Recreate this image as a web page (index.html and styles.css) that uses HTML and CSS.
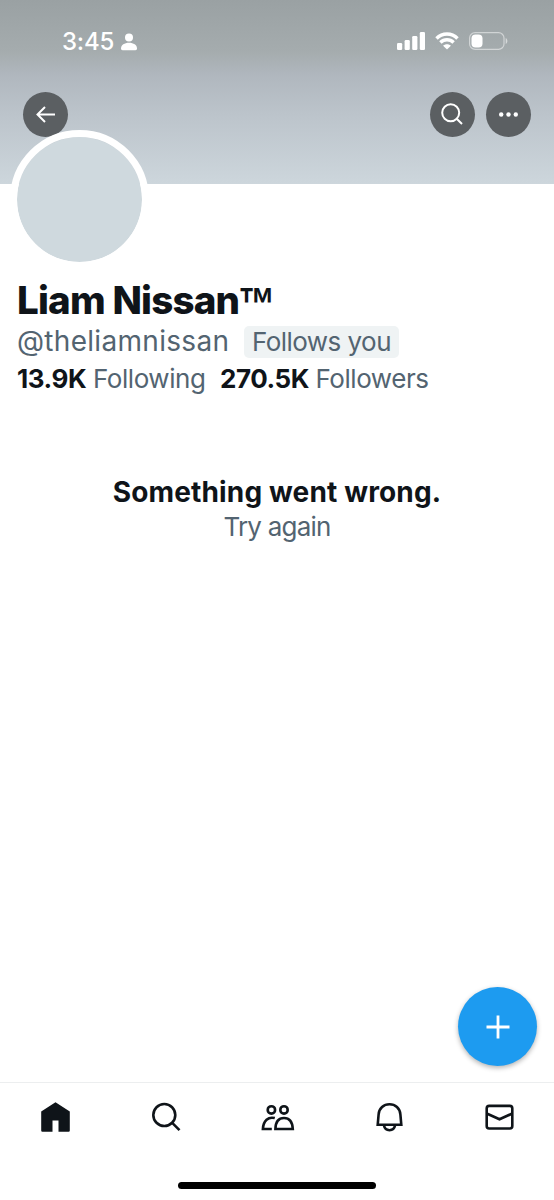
FILE: index.html
```
<!DOCTYPE html>
<html lang="en">
<head>
    <meta charset="UTF-8">
    <meta name="viewport" content="width=device-width, initial-scale=1.0">
    <title>Liam Nissan™</title>
    <link rel="stylesheet" href="styles.css">
</head>
<body>
    <div class="screen">
        <header class="banner">
            <div class="status-bar">
                <div class="status-left">
                    <span class="time">3:45</span>
                    <svg width="16" height="18" viewBox="0 0 16 18" fill="#fff">
                        <circle cx="8" cy="4.5" r="4"/>
                        <path d="M0 15.500C0 12 3.500 9.800 8 9.800s8 2.200 8 5.700c0 1.200-.6 1.700-1.600 1.700H1.600C.6 17.200 0 16.700 0 15.500z"/>
                    </svg>
                </div>
                <div class="status-right">
                    <svg width="28" height="18" viewBox="0 0 28 18" fill="#fff">
                        <rect x="0" y="11" width="5.2" height="7" rx="1.3"/>
                        <rect x="7.6" y="8" width="5.2" height="10" rx="1.3"/>
                        <rect x="15.2" y="4" width="5.2" height="14" rx="1.3"/>
                        <rect x="22.8" y="0" width="5.2" height="18" rx="1.3"/>
                    </svg>
                    <svg width="24" height="18" viewBox="0 0 24 18">
                        <path d="M1.500 6.500C7.300 .5 16.700 .5 22.500 6.500M5.400 10.500c3.700-3.700 9.500-3.700 13.200 0" fill="none" stroke="#fff" stroke-width="3.4"/>
                        <path d="M12 17.600l-3.900-3.900c2.200-2 5.600-2 7.800 0z" fill="#fff"/>
                    </svg>
                    <svg width="39" height="18" viewBox="0 0 39 18">
                        <rect x=".6" y=".6" width="34.4" height="16.8" rx="5.5" fill="none" stroke="#fff" stroke-opacity=".5" stroke-width="1.2"/>
                        <rect x="2.5" y="2.5" width="11" height="13" rx="4" fill="#fff"/>
                        <path d="M36.700 6c2.200 1 2.200 5 0 6z" fill="#fff" fill-opacity=".55"/>
                    </svg>
                </div>
            </div>
            <div class="toolbar">
                <button class="round-btn back" aria-label="Back">
                    <svg width="45" height="45" viewBox="0 0 45 45">
                        <path d="M32 22.500H15M22 15L14.500 22.500 22 30"/>
                    </svg>
                </button>
                <button class="round-btn" aria-label="Search">
                    <svg width="45" height="45" viewBox="0 0 45 45">
                        <circle cx="20.7" cy="20.700" r="8.5"/>
                        <path d="M26.700 26.700l5.300 5.300"/>
                    </svg>
                </button>
                <button class="round-btn" aria-label="More">
                    <svg class="dots" width="45" height="45" viewBox="0 0 45 45">
                        <circle cx="15.2" cy="22.500" r="2.200"/>
                        <circle cx="22.5" cy="22.500" r="2.200"/>
                        <circle cx="29.8" cy="22.500" r="2.200"/>
                    </svg>
                </button>
            </div>
        </header>

        <main class="content">
            <div class="avatar"></div>
            <h1 class="name">Liam Nissan<span class="tm">™</span></h1>
            <div class="handle-row">
                <span class="handle">@theliamnissan</span>
                <span class="badge">Follows you</span>
            </div>
            <div class="stats">
                <b class="following-count">13.9K</b>
                <span class="following">Following</span>
                <b class="followers-count">270.5K</b>
                <span class="followers">Followers</span>
            </div>
            <div class="error">
                <p class="error-title">Something went wrong.</p>
                <a class="retry">Try again</a>
            </div>
        </main>

        <button class="compose" aria-label="New post">
            <svg width="24" height="24" viewBox="0 0 24 24">
                <path d="M12 .5v23M.5 12h23" stroke="#fff" stroke-width="2.8"/>
            </svg>
        </button>

        <nav class="tabs">
            <svg width="36" height="36" viewBox="-.5 0 36 36">
                <path d="M18 3.300L32.300 12.500V31.500q0 1.200-1.200 1.200H21V21.500h-6v11.200H4.900q-1.200 0-1.200-1.200V12.500z" fill="#0f1419"/>
            </svg>
            <svg class="line" width="36" height="36" viewBox="-.5 0 36 36">
                <circle cx="15.800" cy="16" r="11"/>
                <path d="M23.700 23.900l7.300 7.300"/>
            </svg>
            <svg class="line" width="36" height="36" viewBox="-.8 0 36 36">
                <circle cx="11.600" cy="10.900" r="3.700"/>
                <circle cx="24.200" cy="10.900" r="3.700"/>
                <path d="M15 19.100C8.500 17.300 3.500 21.800 3.100 30H12"/>
                <path d="M15.600 30C15.800 22.800 19 19 24.200 19S32.600 22.800 33 30z"/>
            </svg>
            <svg class="line" width="36" height="36" viewBox="-1.5 0 36 36">
                <path d="M6.200 25.800L7.100 15.500C7.500 9 12.300 5.300 18 5.300s10.500 3.700 10.900 10.200l.9 10.300z"/>
                <path d="M12.400 26.300c.6 2.900 2.600 4.900 5.600 4.900s5-2 5.600-4.900"/>
            </svg>
            <svg class="line" width="36" height="36" viewBox="-.5 0 36 36">
                <rect x="5.200" y="6.900" width="25.600" height="22.600" rx="2.500"/>
                <path d="M5.200 14.500L18 20.300 30.800 14.500"/>
            </svg>
        </nav>
        <div class="home-indicator"></div>
    </div>
</body>
</html>
```
FILE: styles.css
```
* {
    box-sizing: border-box;
}
body {
    margin: 0;
    background: #fff;
    color: #0f1419;
    font-family: Inter, "Liberation Sans", sans-serif;
}
.screen {
    position: relative;
    display: flex;
    flex-direction: column;
    width: 554px;
    height: 1200px;
    overflow: hidden;
}
svg {
    display: block;
    flex: none;
}
button {
    padding: 0;
    border: none;
}
.banner {
    height: 184px;
    background: linear-gradient(#9aa1a3 0, #a5acae 52px, #b0b7be 75px, #bcc4cb 115px, #cdd6dc 184px);
}
.status-bar {
    display: flex;
    justify-content: space-between;
    height: 92px;
    padding: 32px 46px 0 62px;
}
.status-left {
    display: flex;
    gap: 6px;
    height: 19px;
    align-items: center;
}
.time {
    width: 53px;
    color: #fff;
    font-size: 24px;
    font-weight: 500;
    letter-spacing: -0.2px;
    line-height: 18px;
    white-space: nowrap;
}
.status-right {
    display: flex;
    gap: 10px;
}
.toolbar {
    display: flex;
    gap: 11px;
    padding: 0 23px;
}
.round-btn {
    width: 45px;
    height: 45px;
    border-radius: 50%;
    background: #5b5f62;
}
.round-btn svg {
    fill: none;
    stroke: #fff;
    stroke-width: 2;
}
.round-btn .dots {
    fill: #fff;
    stroke: none;
}
.back {
    margin-right: auto;
}
.content {
    flex: 1;
    padding: 0 17px;
}
.avatar {
    position: relative;
    width: 139px;
    height: 139px;
    margin: -54px 0 0 -7px;
    border: 7px solid #fff;
    border-radius: 50%;
    background: #cfd9de;
    background-clip: padding-box;
}
.name {
    height: 42px;
    margin: 10px 0 0;
    font-size: 38.5px;
    font-weight: 800;
    line-height: 42px;
    letter-spacing: -0.8px;
    white-space: nowrap;
}
.tm {
    display: inline-block;
    margin-left: -1px;
    font-family: "Liberation Sans", sans-serif;
    font-size: 37px;
    font-weight: 700;
    transform: scaleY(1.25);
    transform-origin: 0 8px;
}
.handle-row {
    display: flex;
    align-items: center;
    height: 38px;
    margin-top: 2px;
    color: #536471;
    font-size: 28px;
    white-space: nowrap;
}
.handle {
    width: 227px;
    letter-spacing: 0.3px;
    line-height: 32px;
    padding-bottom: 2px;
}
.badge {
    width: 155px;
    height: 32px;
    padding-left: 8px;
    border-radius: 5px;
    background: #eff3f4;
    font-size: 26px;
    letter-spacing: -0.55px;
    line-height: 32px;
}
.stats {
    display: flex;
    height: 36px;
    color: #536471;
    font-size: 26px;
    letter-spacing: -0.45px;
    line-height: 36px;
    white-space: nowrap;
}
.stats b {
    color: #0f1419;
}
.following-count {
    width: 76px;
}
.following {
    width: 127px;
}
.followers-count {
    width: 95.5px;
}
.error {
    padding-top: 77px;
    text-align: center;
}
.error-title {
    margin: 0;
    font-size: 28px;
    font-weight: 700;
    letter-spacing: 0.15px;
    line-height: 36px;
}
.retry {
    display: block;
    color: #536471;
    font-size: 26px;
    letter-spacing: -0.8px;
    line-height: 33px;
}
.compose {
    position: absolute;
    right: 17px;
    bottom: 134px;
    display: flex;
    align-items: center;
    justify-content: center;
    width: 79px;
    height: 79px;
    border-radius: 50%;
    background: #1d9bf0;
    box-shadow: 0 2px 5px rgba(0, 0, 0, 0.3);
}
.tabs {
    display: flex;
    justify-content: space-around;
    height: 100px;
    padding-top: 16px;
    border-top: 1px solid #eceeef;
}
.line {
    fill: none;
    stroke: #0f1419;
    stroke-width: 2.6;
}
.home-indicator {
    width: 198px;
    height: 7px;
    margin: 0 auto 11px;
    border-radius: 4px;
    background: #000;
}
```
